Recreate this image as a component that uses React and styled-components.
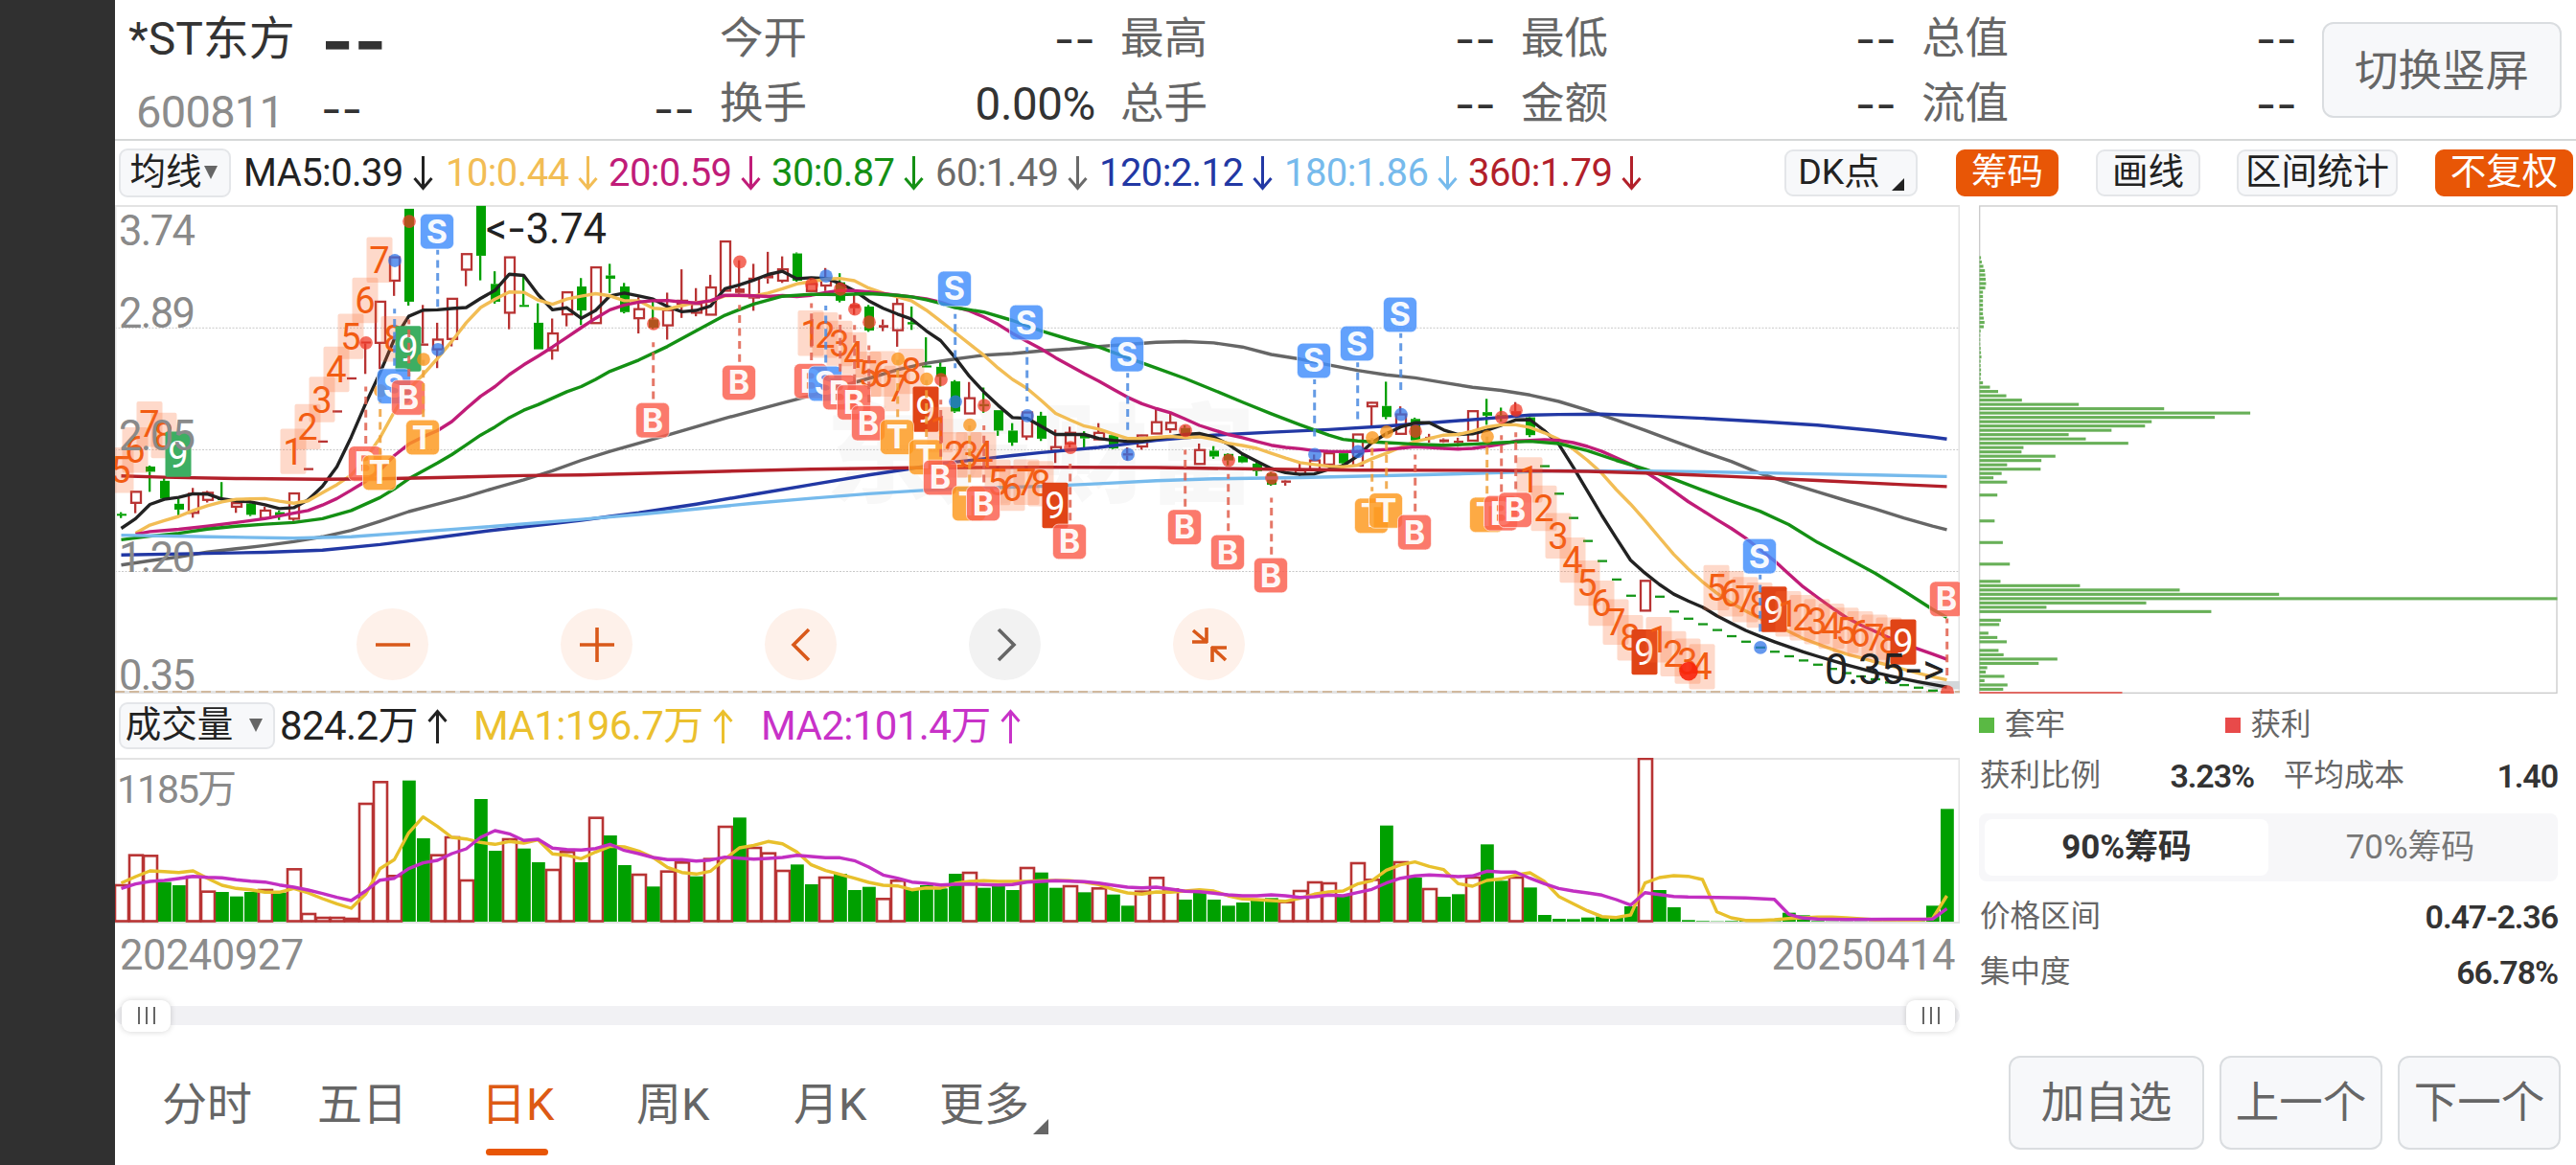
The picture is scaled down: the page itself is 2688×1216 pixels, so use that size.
import React from "react";
import styled, { createGlobalStyle } from "styled-components";

const FONT = 'Roboto, "Noto Sans CJK SC", sans-serif';

const GlobalStyle = createGlobalStyle`
  * { box-sizing: border-box; }
  html, body { margin: 0; padding: 0; background: #fff; }
  body { width: 2688px; height: 1216px; overflow: hidden; font-family: ${FONT}; color: #222; }
  button { font-family: inherit; margin: 0; }
`;

/* ---------- data ---------- */

const STEP = 15;
const FIRST_X = 127;
const xOf = (i) => FIRST_X + STEP * i;
const priceY = (v) => 200 + v / 2.9585;
const volY = (v) => 720 + v / 3;

// index, high, body top, body bottom, low, kind (r hollow, f filled red, g filled green)
const CANDLES = [
  [0, 990, 995, 1000, 1008, "g"], [1, 927, 927, 961, 993, "r"], [2, 846, 849, 865, 927, "g"], [3, 885, 893, 948, 948, "g"],
  [4, 948, 964, 982, 1000, "g"], [5, 915, 933, 992, 1007, "r"], [6, 924, 930, 952, 960, "r"], [7, 897, 947, 951, 951, "g"],
  [8, 955, 962, 973, 992, "r"], [9, 958, 963, 998, 1002, "g"], [10, 973, 985, 1008, 1008, "r"], [11, 985, 990, 1001, 1014, "g"],
  [12, 932, 932, 1010, 1017, "r"], [17, 463, 463, 469, 563, "f"], [18, 340, 340, 467, 548, "r"], [19, 203, 203, 275, 322, "r"],
  [20, 53, 53, 340, 352, "g"], [21, 350, 469, 476, 476, "f"], [22, 405, 457, 487, 545, "r"], [23, 331, 331, 455, 478, "r"],
  [24, 193, 193, 241, 292, "r"], [25, 44, 44, 198, 274, "g"], [26, 246, 285, 340, 346, "g"], [27, 203, 203, 374, 425, "r"],
  [28, 262, 350, 354, 354, "g"], [29, 345, 405, 487, 487, "g"], [30, 392, 438, 490, 519, "r"], [31, 311, 311, 379, 416, "r"],
  [32, 267, 293, 367, 412, "g"], [33, 234, 234, 406, 406, "r"], [34, 223, 259, 269, 313, "g"], [35, 282, 293, 372, 376, "g"],
  [36, 326, 363, 391, 438, "r"], [37, 340, 395, 420, 424, "g"], [38, 312, 366, 413, 457, "r"], [39, 240, 337, 347, 390, "r"],
  [40, 298, 347, 374, 385, "r"], [41, 257, 296, 380, 380, "r"], [42, 154, 154, 306, 306, "r"], [43, 212, 299, 313, 318, "f"],
  [44, 223, 269, 327, 368, "r"], [45, 186, 258, 268, 284, "f"], [46, 200, 240, 275, 282, "r"], [47, 188, 191, 275, 278, "g"],
  [48, 265, 285, 307, 307, "r"], [49, 236, 268, 290, 307, "r"], [50, 252, 280, 337, 342, "g"], [51, 318, 348, 360, 380, "f"],
  [52, 350, 355, 429, 433, "g"], [53, 395, 412, 420, 431, "f"], [54, 325, 347, 428, 479, "r"], [55, 355, 403, 410, 427, "g"],
  [56, 450, 537, 542, 542, "g"], [57, 523, 541, 572, 602, "g"], [58, 582, 586, 679, 683, "g"], [59, 588, 638, 685, 685, "r"],
  [60, 605, 656, 663, 683, "g"], [61, 675, 675, 738, 754, "g"], [62, 715, 738, 775, 785, "g"], [63, 692, 682, 756, 767, "r"],
  [64, 680, 692, 763, 770, "g"], [65, 735, 789, 800, 838, "r"], [66, 726, 745, 778, 790, "r"], [67, 740, 753, 762, 790, "g"],
  [68, 715, 745, 765, 765, "r"], [69, 748, 752, 793, 795, "g"], [70, 790, 808, 815, 830, "f"], [71, 751, 753, 787, 797, "r"],
  [72, 668, 712, 747, 747, "r"], [73, 685, 714, 734, 745, "r"], [74, 722, 730, 747, 755, "g"], [75, 778, 798, 841, 841, "r"],
  [76, 786, 800, 818, 825, "g"], [77, 808, 810, 830, 845, "g"], [78, 812, 817, 836, 838, "g"], [79, 832, 840, 863, 878, "g"],
  [80, 866, 870, 905, 908, "g"], [81, 890, 892, 899, 908, "f"], [82, 840, 861, 872, 887, "r"], [83, 812, 830, 858, 858, "r"],
  [84, 808, 808, 843, 843, "r"], [85, 805, 808, 839, 845, "g"], [86, 750, 750, 846, 846, "r"], [87, 650, 652, 663, 722, "r"],
  [88, 587, 662, 696, 703, "g"], [89, 663, 688, 748, 748, "r"], [90, 698, 702, 768, 772, "g"], [91, 748, 757, 764, 775, "f"],
  [92, 762, 765, 774, 776, "f"], [93, 760, 769, 776, 788, "f"], [94, 678, 678, 769, 769, "r"], [95, 640, 681, 692, 720, "g"],
  [96, 667, 690, 700, 710, "g"], [97, 650, 678, 690, 690, "f"], [98, 693, 697, 752, 758, "g"], [106, 1202, 1202, 1294, 1294, "r"],
];

// one-price limit bars: index, level, kind
const LIMITS = [
  [13, 857, "r"], [14, 772, "r"], [15, 679, "r"], [16, 577, "r"],
  [99, 848, "g"], [100, 933, "g"], [101, 1008, "g"], [102, 1079, "g"], [103, 1141, "g"], [104, 1198, "g"], [105, 1248, "g"],
  [107, 1251, "g"], [108, 1297, "g"], [109, 1319, "g"], [110, 1336, "g"], [111, 1354, "g"], [112, 1373, "g"], [113, 1390, "g"],
  [114, 1408, "g"], [115, 1421, "g"], [116, 1435, "g"], [117, 1448, "g"], [118, 1461, "g"], [119, 1474, "g"], [120, 1487, "g"],
  [121, 1497, "g"], [122, 1506, "g"], [123, 1516, "g"], [124, 1524, "g"], [125, 1532, "g"], [126, 1541, "g"],
];

const run = (start, values) => values.map((v, k) => [start + k, v]);

const MA5 = run(0, [
  1040, 1010, 966, 950, 944, 933, 934, 949, 955, 958, 967, 979, 976, 952, 910, 850, 758, 655, 560, 455, 385, 366, 365, 361, 358,
  330, 305, 255, 259, 318, 365, 359, 391, 367, 322, 313, 322, 332, 355, 371, 367, 353, 300, 288, 273, 256, 246, 269, 266, 268,
  283, 306, 337, 360, 378, 394, 430, 460, 512, 570, 618, 660, 698, 700, 725, 750, 750, 750, 762, 768, 771, 771, 763, 757, 750,
  747, 758, 780, 810, 833, 855, 868, 873, 872, 858, 846, 817, 775, 748, 727, 714, 714, 736, 750, 748, 737, 722, 705, 704, 738,
  780, 850, 925, 1000, 1070, 1138, 1178, 1213, 1243, 1264, 1283, 1310, 1333, 1355, 1373, 1390, 1406, 1421, 1435, 1448, 1461,
  1473, 1485, 1495, 1505, 1514, 1522, 1530,
]);
const MA10 = run(1, [
  1055, 1030, 1016, 1003, 985, 970, 958, 950, 949, 948, 956, 962, 955, 930, 905, 875, 825, 760, 680, 610, 565, 515, 462, 405,
  358, 332, 310, 311, 335, 348, 332, 323, 315, 322, 337, 337, 360, 363, 352, 342, 338, 322, 320, 322, 313, 300, 285, 278, 270,
  268, 275, 298, 313, 325, 338, 366, 400, 435, 470, 505, 545, 580, 607, 645, 685, 705, 724, 733, 748, 762, 762, 759, 756, 760,
  757, 765, 777, 784, 793, 808, 823, 837, 843, 848, 850, 845, 825, 808, 790, 772, 762, 752, 750, 740, 727, 720, 720, 728, 745,
  765, 795, 830, 870, 920, 965, 1015, 1068, 1120, 1165, 1205, 1240, 1270, 1295, 1318, 1338, 1358, 1380, 1397, 1413, 1428, 1440,
  1452, 1463, 1475, 1487, 1498, 1508,
]);
const MA20 = [
  [1, 1058], [2, 1050], [4, 1043], [6, 1033], [8, 1022], [10, 1010],
  ...run(12, [
    993, 985, 968, 948, 922, 895, 860, 815, 780, 757, 738, 710, 670, 632, 602, 565, 535, 508, 480, 450, 420, 391, 365, 350, 341,
    337, 336, 341, 344, 337, 320, 320, 322, 324, 321, 324, 320, 312, 305, 306, 310, 315, 320, 325, 331, 341, 356, 368, 387, 410,
    438, 462, 486, 513, 538, 562, 585, 610, 635, 655, 670, 683, 702, 722, 736, 750, 760, 772, 783, 790, 794, 800, 802, 803, 803,
    799, 796, 792, 788, 790, 793, 795, 793, 787, 780, 770, 768, 766, 768, 775, 787, 802, 822, 842, 865, 893, 925, 957, 985, 1013,
    1040, 1070, 1105, 1140, 1180, 1220, 1253, 1285, 1315, 1338, 1358, 1378, 1396, 1412, 1428, 1444,
  ]),
];
const MA30 = [
  [0, 1075], [2, 1064], [4, 1055], [6, 1042], [8, 1033], [10, 1027], [12, 1022], [14, 1010], [16, 985], [18, 945], [19, 918],
  [20, 887], [21, 862], [22, 838], [23, 812], [24, 782], [25, 752], [26, 727], [27, 698], [28, 675], [29, 658], [30, 638],
  [31, 618], [32, 602], [33, 580], [34, 555], [36, 520], [38, 478], [40, 430], [42, 382], [44, 347], [46, 323], [48, 317],
  [50, 318], [52, 315], [54, 320], [55, 325], [56, 334], [57, 345], [58, 358], [60, 372], [62, 398], [64, 430], [66, 457],
  [68, 480], [70, 513], [72, 545], [74, 577], [76, 613], [78, 650], [80, 686], [82, 720], [84, 752], [85, 765], [86, 770],
  [88, 775], [90, 780], [92, 783], [94, 780], [96, 775], [98, 771], [100, 778], [102, 800], [104, 830], [106, 857], [108, 888],
  [110, 922], [112, 955], [114, 987], [116, 1028], [118, 1083], [120, 1130], [122, 1178], [124, 1233], [126, 1290], [127, 1315],
];
const MA60 = [
  [0, 1153], [2, 1140], [4, 1128], [6, 1113], [8, 1103], [10, 1093], [12, 1081], [14, 1066], [16, 1046], [18, 1018], [20, 988],
  [22, 965], [24, 942], [26, 915], [28, 890], [30, 862], [32, 830], [34, 802], [38, 752], [42, 700], [46, 653], [48, 630],
  [50, 602], [52, 577], [54, 550], [56, 530], [58, 517], [60, 505], [62, 500], [64, 492], [66, 486], [68, 478], [70, 472],
  [72, 465], [74, 463], [76, 467], [78, 480], [80, 503], [82, 517], [84, 535], [86, 552], [88, 566], [90, 575], [92, 590],
  [94, 604], [96, 614], [98, 628], [100, 648], [102, 675], [104, 705], [106, 737], [108, 770], [110, 803], [112, 833],
  [114, 870], [116, 900], [118, 927], [120, 954], [122, 980], [124, 1008], [126, 1033], [127, 1044],
];
const MA120 = [
  [0, 1122], [5, 1118], [10, 1114], [14, 1107], [18, 1090], [22, 1068], [26, 1045], [30, 1025], [32, 1015], [34, 1003],
  [36, 992], [40, 965], [44, 935], [48, 905], [52, 875], [55, 855], [57, 840], [60, 825], [62, 815], [64, 806], [68, 790],
  [72, 768], [76, 752], [80, 743], [84, 735], [88, 724], [92, 711], [96, 697], [98, 690], [100, 688], [103, 687], [106, 692],
  [110, 700], [114, 710], [118, 721], [122, 738], [126, 758], [127, 764],
];
const MA180 = [
  [0, 1061], [6, 1066], [12, 1070], [16, 1066], [20, 1053], [26, 1033], [32, 1012], [36, 997], [40, 980], [44, 962], [48, 947],
  [52, 933], [56, 922], [60, 915], [64, 910], [68, 902], [72, 893], [76, 887], [82, 883], [90, 875], [96, 868], [100, 862],
  [106, 863], [110, 865], [116, 870], [122, 875], [127, 880],
];
const MA360 = [
  [0, 878], [3, 882], [8, 886], [14, 888], [18, 887], [22, 883], [28, 877], [32, 875], [40, 866], [48, 857], [55, 853],
  [64, 851], [72, 852], [80, 857], [86, 860], [96, 861], [102, 864], [106, 869], [112, 880], [118, 892], [124, 905], [127, 911],
];

const AVERAGES = [
  { color: "#666", points: MA60 },
  { color: "#2238a4", points: MA120 },
  { color: "#222", points: MA5 },
  { color: "#f2bd55", points: MA10 },
  { color: "#c01c78", points: MA20 },
  { color: "#149014", points: MA30 },
  { color: "#76baec", points: MA180 },
  { color: "#b2202a", points: MA360 },
];

// index, level of the badge centre, letter, stem start, stem end
const SIGNALS = [
  [17, 840, "B", 602, 785], [18, 868, "T", 640, 820], [19, 601, "S", 362, 545], [20, 636, "B", 395, 580], [21, 759, "T", 520, 700],
  [22, 123, "S", 180, 362], [37, 706, "B", 465, 647], [43, 590, "B", 350, 532], [48, 585, "B", 345, 525], [49, 593, "S", 352, 535],
  [50, 620, "B", 380, 565], [51, 651, "B", 412, 597], [52, 715, "B", 475, 660], [54, 758, "T", 520, 700], [56, 820, "T", 582, 765],
  [57, 883, "B", 643, 827], [58, 300, "S", 378, 545], [59, 963, "T", 722, 905], [60, 963, "B", 722, 905], [63, 404, "S", 480, 648],
  [66, 1081, "B", 840, 1023], [70, 502, "S", 560, 742], [74, 1036, "B", 797, 978], [77, 1114, "B", 872, 1057],
  [80, 1185, "B", 945, 1127], [83, 522, "S", 580, 763], [86, 469, "S", 527, 710], [87, 1001, "T", 760, 925],
  [88, 985, "T", 742, 925], [89, 380, "S", 437, 625], [90, 1052, "B", 812, 993], [95, 998, "T", 757, 940], [96, 993, "B", 752, 935],
  [97, 983, "B", 743, 925], [114, 1126, "S", 1183, 1365], [127, 1258, "B", 1318, 1500],
];

const DOTS = [
  [17, 467, "B"], [18, 615, "T"], [19, 213, "S"], [20, 92, "B"], [21, 518, "T"], [22, 488, "S"], [37, 408, "B"], [43, 217, "B"],
  [48, 287, "B"], [49, 261, "S"], [50, 301, "B"], [51, 363, "B"], [52, 403, "B"], [54, 517, "T"], [56, 579, "T"], [57, 580, "B"],
  [58, 649, "S"], [59, 721, "T"], [60, 660, "B"], [63, 692, "S"], [66, 790, "B"], [70, 812, "S"], [74, 738, "B"], [77, 830, "B"],
  [80, 884, "B"], [83, 812, "S"], [86, 803, "S"], [87, 760, "T"], [88, 742, "T"], [89, 688, "S"], [90, 740, "B"], [95, 757, "T"],
  [96, 697, "B"], [97, 675, "B"], [114, 1408, "S"], [127, 1545, "B"],
];

const SIGNAL_COLORS = {
  S: { badge: "#448ffb", dot: "#2f74e8", stem: "#4a8ae0" },
  B: { badge: "#fa6050", dot: "#f03a28", stem: "#e0604e" },
  T: { badge: "#fd9a20", dot: "#fb9010", stem: "#eea03a" },
};

// index, level of the box centre, digit, box colour for a completed count
const COUNTS = [
  [0, 860, 5], [1, 798, 6], [2, 718, 7], [3, 753, 8], [4, 811, 9, "#3dae62"],
  [12, 802, 1], [13, 726, 2], [14, 642, 3], [15, 549, 4], [16, 447, 5], [17, 336, 6], [18, 211, 7], [19, 455, 8], [20, 485, 9, "#3dae62"],
  [48, 437, 1], [49, 443, 2], [50, 469, 3], [51, 504, 4], [52, 564, 5], [53, 563, 6], [54, 608, 7], [55, 555, 8], [56, 672, 9, "#e04416"],
  [57, 735, 1], [58, 813, 2], [59, 813, 3], [60, 813, 4], [61, 898, 5], [62, 916, 6], [63, 897, 7], [64, 902, 8], [65, 969, 9, "#e04416"],
  [98, 890, 1], [99, 978, 2], [100, 1063, 3], [101, 1138, 4], [102, 1209, 5], [103, 1271, 6], [104, 1329, 7], [105, 1378, 8],
  [106, 1422, 9, "#e04416"], [107, 1384, 1], [108, 1427, 2], [109, 1450, 3], [110, 1467, 4],
  [111, 1223, 5], [112, 1242, 6], [113, 1260, 7], [114, 1277, 8], [115, 1290, 9, "#e04416"],
  [116, 1304, 1], [117, 1316, 2], [118, 1328, 3], [119, 1342, 4], [120, 1355, 5], [121, 1366, 6], [122, 1376, 7], [123, 1385, 8],
  [124, 1391, 9, "#e04416"],
];

const VOLUMES = (
  "r612 r518 r520 g602 g612 r585 r632 g633 g647 g633 r627 g635 r562 r702 r714 r714 r717 r357 r289 r583 g284 g465 r518 r462 r597 " +
  "g342 g504 r468 g497 g540 r564 r508 g540 r401 g456 g549 r579 g616 r569 r541 g584 r530 r429 g400 r495 r512 r567 g547 g609 r588 " +
  "g576 g627 g617 r655 r598 g625 g612 g622 g576 r573 g620 g615 g627 r558 g572 g620 r615 g634 r622 g641 g676 r632 r589 r625 g657 " +
  "g630 g657 g676 g666 g660 g652 r665 r630 r603 r606 g645 r543 r595 g425 r540 g588 r624 g648 g640 r588 g484 g598 r588 g619 g705 " +
  "g717 g718 g713 g710 g712 g678 r216 g627 g681 g721 g724 g725 g724 g722 g725 g724 g698 g706 g724 g725 g725 g725 g725 g725 g725 " +
  "g724 g676 g373"
).split(" ").map((s) => [s[0], Number(s.slice(1))]);

const VOL_MA1 = [
  ...run(0, [
    605, 585, 567, 569, 572, 567, 590, 612, 622, 626, 634, 634, 622, 636, 654, 670, 684, 640, 560, 532, 448, 398, 428, 462, 467,
    478, 484, 475, 480, 470, 514, 518, 529, 508, 490, 492, 505, 525, 556, 572, 577, 568, 530, 495, 487, 475, 482, 508, 548, 566,
    578, 590, 603, 612, 614, 626, 620, 621, 606, 600, 598, 600, 600, 600, 598, 597, 598, 602, 610, 625, 636, 640, 633, 634, 630,
    626, 630, 645, 655, 657, 660, 662, 653, 640, 633, 630, 608, 598, 565, 548, 539, 553, 563, 607, 615, 597, 592, 580, 573, 600,
    647, 670, 692, 710, 713, 705, 605, 588, 582, 584, 594, 695, 714, 722, 722, 720, 716, 714, 712, 712, 714,
  ]),
  [122, 720], [125, 721], [126, 717], [127, 645],
];
const VOL_MA2 = [
  ...run(0, [
    622, 608, 600, 597, 591, 584, 587, 589, 595, 599, 602, 611, 618, 627, 638, 650, 660, 630, 596, 590, 560, 542, 534, 513, 498,
    462, 441, 451, 472, 468, 496, 500, 502, 497, 484, 503, 513, 525, 532, 532, 536, 533, 524, 527, 530, 528, 525, 518, 522, 526,
    526, 535, 555, 580, 590, 602, 606, 611, 609, 608, 610, 611, 610, 602, 600, 598, 599, 601, 605, 612, 618, 620, 618, 624, 631,
    632, 637, 642, 645, 645, 642, 645, 650, 648, 643, 645, 635, 625, 605, 590, 583, 580, 582, 585, 583, 568, 571, 571, 590, 607,
    622, 630, 636, 643, 657, 674, 635, 641, 647, 649,
  ]),
  [111, 650], [113, 652], [115, 656], [116, 703], [117, 715], [118, 718], [120, 719], [126, 718], [127, 685],
];

// holdings per price level: slot from the top, share of the widest bar (1483)
const CHIPS = [
  ...run(0, [
    4, 6, 10, 14, 15, 16, 17, 15, 9, 9, 9, 9, 9, 9, 11, 13, 11, 3, 2, 2, 2, 3, 4, 5, 3, 3, 4, 4, 3, 9, 27, 48, 69, 109, 255, 474,
    695, 604, 442, 425, 339, 229, 273, 382, 113, 108, 195, 159, 71, 157, 57, 36, 71,
  ]),
  [55, 46], [61, 39], [66, 60], [71, 78],
  ...run(75, [54, 258, 514, 769, 1483, 428, 172, 595]),
  [84, 55], [85, 51], [87, 23], [88, 46], [89, 70],
  ...run(91, [49, 62, 200, 152, 20, 16, 64, 13, 72, 61]),
];

const LEGEND = [
  { text: "MA5:0.39", color: "#222", width: 211 },
  { text: "10:0.44", color: "#f2bd55", width: 170 },
  { text: "20:0.59", color: "#c01c78", width: 170 },
  { text: "30:0.87", color: "#149014", width: 171 },
  { text: "60:1.49", color: "#6a6a6a", width: 171 },
  { text: "120:2.12", color: "#2238a4", width: 193 },
  { text: "180:1.86", color: "#76baec", width: 192 },
  { text: "360:1.79", color: "#b2202a", width: 190 },
];

const VOL_LEGEND = [
  { text: "824.2万", color: "#222", width: 202 },
  { text: "MA1:196.7万", color: "#ebc02e", width: 300 },
  { text: "MA2:101.4万", color: "#c832c8", width: 300 },
];

const STATS = [
  [["今开", "--"], ["换手", "0.00%"]],
  [["最高", "--"], ["总手", "--"]],
  [["最低", "--"], ["金额", "--"]],
  [["总值", "--"], ["流值", "--"]],
];

const TABS = [
  ["分时", 162], ["五日", 171], ["日K", 162], ["周K", 164], ["月K", 152], ["更多", 120],
];

/* ---------- styled parts ---------- */

const Screen = styled.div`
  display: flex;
  width: 2688px;
  height: 1216px;
  background: #fff;
`;
const Edge = styled.div`
  flex: none;
  width: 120px;
  background: #303030;
`;
const Main = styled.main`
  flex: 1;
  display: flex;
  flex-direction: column;
  min-width: 0;
`;
const Header = styled.header`
  display: flex;
  height: 147px;
  padding: 7px 15px 0 14px;
  border-bottom: 2px solid #d6d8d8;
`;
const Column = styled.div`
  flex: none;
  width: ${(p) => p.$width}px;
  margin-right: ${(p) => p.$gap || 0}px;
`;
const Line = styled.div`
  display: flex;
  justify-content: space-between;
  align-items: center;
  height: 68px;
  padding-top: ${(p) => p.$drop || 0}px;
  padding-left: ${(p) => p.$indent || 0}px;
  line-height: 68px;
  white-space: nowrap;
`;
const StockName = styled.span`
  font-size: 48px;
  color: #333;
`;
const StockCode = styled.span`
  font-size: 47px;
  letter-spacing: -0.7px;
  color: #8c8c8c;
`;
const Label = styled.span`
  font-size: 45.5px;
  color: #666;
`;
const Value = styled.span`
  font-size: 47.5px;
  letter-spacing: -0.4px;
  color: #333;
`;
const Blank = styled.span`
  font-family: Inter, sans-serif;
  font-size: ${(p) => (p.$big ? 73 : 47)}px;
  font-weight: ${(p) => (p.$big ? 700 : 400)};
  color: #333;
`;
const PlainButton = styled.button`
  flex: none;
  width: ${(p) => p.$width}px;
  height: ${(p) => p.$height}px;
  padding: ${(p) => p.$drop || 0}px 0 0;
  border: 2px solid #dadde0;
  border-radius: 12px;
  background: #f7f8fa;
  color: #666;
  font-size: 45.5px;
  line-height: 1;
  white-space: nowrap;
`;
const HeaderButton = styled(PlainButton)`
  margin: 16px 0 0 auto;
  padding-top: 3px;
`;
const Toolbar = styled.div`
  display: flex;
  align-items: center;
  height: 67px;
  padding: 0 3px 0 4px;
`;
const Chip = styled.button`
  flex: none;
  display: flex;
  align-items: center;
  justify-content: center;
  gap: ${(p) => p.$gap || 0}px;
  width: ${(p) => p.$width}px;
  height: ${(p) => p.$height || 49}px;
  margin-right: ${(p) => p.$after || 0}px;
  padding: 0 ${(p) => p.$shift || 0}px 2px 0;
  border: 2px solid ${(p) => (p.$active ? "#e85606" : "#e4e6e9")};
  border-radius: 9px;
  background: ${(p) => (p.$active ? "#e85606" : "#f7f8fa")};
  color: ${(p) => (p.$active ? "#fff" : "#222")};
  font-size: 37.5px;
  line-height: 1;
  white-space: nowrap;
`;
const Legend = styled.div`
  display: flex;
  flex: 1;
  padding-left: ${(p) => p.$indent}px;
`;
const LegendItem = styled.div`
  flex: none;
  display: flex;
  align-items: center;
  gap: 10px;
  width: ${(p) => p.$width}px;
  color: ${(p) => p.$color};
  font-size: ${(p) => p.$size}px;
  letter-spacing: -0.6px;
  line-height: 1;
  white-space: nowrap;
`;
const Body = styled.div`
  display: flex;
  gap: 20px;
  height: 870px;
`;
const Charts = styled.section`
  flex: none;
  display: flex;
  flex-direction: column;
  width: 1925px;
`;
const PriceArea = styled.div`
  position: relative;
  height: 510px;
`;
const Drawing = styled.svg`
  display: block;
`;
const Controls = styled.div`
  position: absolute;
  left: 252px;
  bottom: 14px;
  display: flex;
  gap: 138px;
`;
const RoundButton = styled.button`
  display: flex;
  align-items: center;
  justify-content: center;
  width: 75px;
  height: 75px;
  padding: 0;
  border: 0;
  border-radius: 50%;
  background: ${(p) => (p.$muted ? "#f2f2f2" : "#fef1ea")};
  color: ${(p) => (p.$muted ? "#666" : "#d9591a")};
`;
const Dates = styled.div`
  display: flex;
  justify-content: space-between;
  padding: 9px 5px 0 5px;
  color: #8c8c8c;
  font-size: 43.5px;
  letter-spacing: -0.5px;
  line-height: 50px;
`;
const Track = styled.div`
  display: flex;
  align-items: center;
  justify-content: space-between;
  height: 20px;
  margin-top: 27px;
  padding: 0 5px 0 7px;
  border-radius: 10px;
  background: #f1f1f4;
`;
const Thumb = styled.div`
  display: flex;
  align-items: center;
  justify-content: center;
  gap: 6px;
  width: 51px;
  height: 33px;
  border-radius: 9px;
  background: #fff;
  box-shadow: 0 0 6px rgba(0, 0, 0, 0.18);
`;
const Grip = styled.i`
  width: 2px;
  height: 18px;
  background: #666;
`;
const Panel = styled.aside`
  width: 604px;
  color: #666;
  font-size: 31.5px;
`;
const Keys = styled.div`
  display: flex;
  align-items: center;
  height: 66px;
`;
const Key = styled.div`
  display: flex;
  align-items: center;
  gap: 11px;
  width: 256.5px;
  line-height: 1;
`;
const Swatch = styled.i`
  width: 16px;
  height: 16px;
  background: ${(p) => p.$color};
`;
const Pairs = styled.div`
  display: flex;
  align-items: center;
  gap: 31px;
  height: ${(p) => p.$height}px;
  padding-left: 1px;
`;
const Pair = styled.div`
  display: flex;
  flex: ${(p) => (p.$width ? "none" : 1)};
  width: ${(p) => (p.$width ? p.$width + "px" : "auto")};
  align-items: center;
  justify-content: space-between;
  line-height: 1;
`;
const Strong = styled.b`
  color: #333;
  font-size: 34px;
  font-weight: 600;
  letter-spacing: -1.1px;
`;
const Segments = styled.div`
  display: flex;
  height: 71px;
  margin: 20px 0 8px;
  padding: 6px;
  border-radius: 8px;
  background: #f7f7f9;
`;
const Segment = styled.button`
  flex: 1;
  padding: 0;
  border: 0;
  border-radius: 8px;
  background: ${(p) => (p.$active ? "#fff" : "transparent")};
  color: ${(p) => (p.$active ? "#333" : "#777")};
  font-size: 35px;
  font-weight: ${(p) => (p.$active ? 700 : 400)};
  letter-spacing: -0.1px;
  line-height: 1;
`;
const Footer = styled.footer`
  display: flex;
  justify-content: space-between;
  padding: 18px 16px 0 49px;
`;
const Tabs = styled.nav`
  display: flex;
`;
const Tab = styled.div`
  display: flex;
  flex-direction: column;
  width: ${(p) => p.$width}px;
  color: ${(p) => (p.$active ? "#dd5a14" : "#666")};
  font-size: 47px;
  line-height: 97px;
  white-space: nowrap;

  &::after {
    content: "";
    width: 65px;
    height: 7px;
    margin: -2px 0 0 5px;
    border-radius: 4px;
    background: ${(p) => (p.$active ? "#e85606" : "transparent")};
  }
`;
const TabText = styled.div`
  display: flex;
  align-items: flex-end;
  gap: 4px;
  height: 99px;
`;
const Corner = styled.i`
  width: 0;
  height: 0;
  margin-bottom: ${(p) => p.$lift}px;
  border-left: ${(p) => p.$size}px solid transparent;
  border-bottom: ${(p) => p.$size}px solid ${(p) => p.$color};
`;
const Caret = styled.i`
  width: 0;
  height: 0;
  border-left: 7.5px solid transparent;
  border-right: 7.5px solid transparent;
  border-top: 14px solid #666;
`;
const Actions = styled.div`
  display: flex;
  gap: 16px;
`;

/* ---------- drawings ---------- */

const Arrow = ({ up }) => (
  <svg width="21" height="36" viewBox="0 0 21 36" fill="none" stroke="currentColor" strokeWidth="3">
    <path d={up ? "M10.5 36V2M1.5 13L10.5 2.5L19.5 13" : "M10.5 0V33M1.5 23L10.5 33.5L19.5 23"} />
  </svg>
);

const Trend = ({ points, color, y, width = 3.4 }) => (
  <polyline
    points={points.map(([i, v]) => `${xOf(i) - 0.5},${y(v).toFixed(1)}`).join(" ")}
    fill="none"
    stroke={color}
    strokeWidth={width}
    strokeLinejoin="round"
  />
);

const RED = "#b83434";
const GREEN = "#00a000";

const Candle = ({ data: [i, high, top, bottom, low, kind] }) => {
  const x = xOf(i);
  const color = kind === "g" ? GREEN : RED;
  const t = priceY(top);
  const b = priceY(bottom);
  const hollow = kind === "r";
  return (
    <g>
      {high < top && <rect x={x - 2} y={priceY(high)} width="2.3" height={t - priceY(high)} fill={color} />}
      {low > bottom && <rect x={x - 2} y={b} width="2.3" height={priceY(low) - b} fill={color} />}
      {hollow ? (
        <rect x={x - 5} y={t} width="10" height={Math.max(2, b - t)} fill="none" stroke={color} strokeWidth="2.3" />
      ) : (
        <rect x={x - 5} y={t} width="10" height={Math.max(2, b - t)} fill={color} />
      )}
    </g>
  );
};

const Count = ({ data: [i, level, digit, full] }) => {
  const x = xOf(i) - 1;
  const y = priceY(level);
  return (
    <g>
      <rect x={x - 13.5} y={y - 23.7} width="27" height="47.4" rx="2" fill={full || "#fa6e32"} fillOpacity={full ? 1 : 0.26} />
      <text x={x} y={y + 13.5} textAnchor="middle" fontSize="38" fill={full ? "#fff" : "#f25c12"}>{digit}</text>
    </g>
  );
};

const Signal = ({ data: [i, level, letter, from, to] }) => {
  const x = xOf(i) - 1;
  const y = priceY(level);
  const c = SIGNAL_COLORS[letter];
  return (
    <g>
      <line x1={x + 0.7} x2={x + 0.7} y1={priceY(from)} y2={priceY(to)} stroke={c.stem} strokeWidth="3" strokeOpacity="0.85" strokeDasharray="8 5.6" strokeDashoffset="3" />
      <rect x={x - 17.5} y={y - 18.3} width="35" height="36.6" rx="6" fill={c.badge} fillOpacity="0.84" stroke="#fff" strokeOpacity="0.6" strokeWidth="1" />
      <text x={x} y={y + 12} textAnchor="middle" fontSize="34" fontWeight="700" fill="#fff" fillOpacity="0.95" fontFamily="Inter, sans-serif">{letter}</text>
    </g>
  );
};

const AxisText = ({ x = 124, y, width = 80, color = "#8a8a8a", children }) => (
  <text x={x} y={y} fontSize="43.5" fill={color} textLength={width}>{children}</text>
);

const PriceChart = () => (
  <Drawing width="1925" height="510" viewBox="120 214 1925 510" fontFamily={FONT}>
    <text x="862" y="516" fontSize="112" fontWeight="900" fill="#f8f8f8" textLength="448" fontFamily="'Noto Sans CJK SC'">东方财富</text>
    {[421, 797, 1173].map((v) => (
      <line key={v} x1="120" x2="2045" y1={priceY(v)} y2={priceY(v)} stroke="#c8c8c8" strokeWidth="1" strokeDasharray="2 1.5" />
    ))}
    <path d="M120.5 722.5V215H2044.5V722.5" fill="none" stroke="#e3e3e3" strokeWidth="2" />
    <line x1="120" x2="2045" y1="722.4" y2="722.4" stroke="#e3e3e3" strokeWidth="3" />
    <line x1="120" x2="2045" y1="722" y2="722" stroke="#c0905c" strokeWidth="1.2" strokeDasharray="10 5" />
    <path d="M1990 711H2045V719.5H2020Z" fill="#d3d7da" />
    {CANDLES.map((c) => <Candle key={c[0]} data={c} />)}
    {LIMITS.map(([i, v, kind]) => (
      <rect key={i} x={xOf(i) - 5} y={priceY(v) - 1.2} width="10" height="2.3" fill={kind === "g" ? "#16961a" : RED} />
    ))}
    {AVERAGES.map((a) => <Trend key={a.color} points={a.points} color={a.color} y={priceY} />)}
    {COUNTS.map((c) => <Count key={c[0]} data={c} />)}
    {DOTS.map(([i, v, letter]) => (
      <circle key={i} cx={xOf(i)} cy={priceY(v)} r="6.9" fill={SIGNAL_COLORS[letter].dot} fillOpacity="0.74" />
    ))}
    <circle cx={xOf(109)} cy={priceY(1481)} r="9.8" fill="#f8240c" fillOpacity="0.9" />
    {SIGNALS.map((s) => <Signal key={s[0]} data={s} />)}
    <AxisText y="256">3.74</AxisText>
    <AxisText y="341.5">2.89</AxisText>
    <AxisText y="469.6">2.05</AxisText>
    <AxisText y="596.7">1.20</AxisText>
    <AxisText y="719.5">0.35</AxisText>
    <AxisText x={507} y={253.5} width={126} color="#222">&lt;<tspan fontFamily="Inter, sans-serif">-</tspan>3.74</AxisText>
    <AxisText x={1904} y={713.8} width={125} color="#222">0.35<tspan fontFamily="Inter, sans-serif">-</tspan>&gt;</AxisText>
  </Drawing>
);

const VolumeChart = () => (
  <Drawing width="1925" height="173" viewBox="120 791 1925 173" fontFamily={FONT}>
    <path d="M120.5 963V792H2044.5V963Z" fill="none" stroke="#e3e3e3" strokeWidth="2" />
    {VOLUMES.map(([kind, v], i) => {
      const x = xOf(i);
      const y = volY(v);
      return kind === "g" ? (
        <rect key={i} x={x - 7} y={y} width="13.8" height={962 - y} fill={GREEN} />
      ) : (
        <rect key={i} x={x - 7} y={y} width="14" height={Math.max(1, 961.5 - y)} fill="#fff" stroke={RED} strokeWidth="2.6" />
      );
    })}
    <Trend points={VOL_MA1} color="#e8c02c" y={volY} />
    <Trend points={VOL_MA2} color="#c22fc2" y={volY} />
    <text x="122" y="838" fontSize="41" fill="#8a8a8a" textLength="125">1185万</text>
  </Drawing>
);

const ChipChart = () => (
  <Drawing width="604" height="510" viewBox="2065 214 604 510">
    <rect x="2065.7" y="215" width="602.3" height="508.3" fill="none" stroke="#c9c9c9" strokeWidth="1.3" />
    {CHIPS.map(([k, v]) => (
      <rect key={k} x="2065.5" y={267.4 + 4.505 * k} width={(v / 1483) * 603} height="3.1" fill="#68b058" />
    ))}
    <rect x="2065.5" y="722" width="149" height="2" fill="#e06a64" />
  </Drawing>
);

const Glyph = ({ d }) => (
  <svg width="40" height="40" viewBox="0 0 40 40" fill="none" stroke="currentColor" strokeWidth="3.6">
    <path d={d} />
  </svg>
);

const CONTROL_ICONS = [
  "M2 20H38",
  "M2 20H38M20 2V38",
  "M28 4L12 20L28 36",
  "M13 4L29 20L13 36",
  "M3 5L17 17M2 17H18M17 2V18M23 38V22M22 23H38M23 23L37 36",
];

const StatValue = ({ children }) => (children === "--" ? <Blank>--</Blank> : <Value>{children}</Value>);

/* ---------- page ---------- */

export default function App() {
  return (
    <Screen>
      <GlobalStyle />
      <Edge />
      <Main>
        <Header>
          <Column $width={201}>
            <Line><StockName>*ST东方</StockName></Line>
            <Line $drop={16} $indent={8}><StockCode>600811</StockCode></Line>
          </Column>
          <Column $width={390} $gap={26}>
            <Line $drop={4}><Blank $big>--</Blank></Line>
            <Line $drop={10}><Blank>--</Blank><Blank>--</Blank></Line>
          </Column>
          {STATS.map((rows, i) => (
            <Column key={i} $width={392} $gap={26}>
              {rows.map(([label, value]) => (
                <Line key={label}><Label>{label}</Label><StatValue>{value}</StatValue></Line>
              ))}
            </Column>
          ))}
          <HeaderButton $width={250} $height={100}>切换竖屏</HeaderButton>
        </Header>
        <Toolbar>
          <Chip $width={117} $height={51} $gap={2} $shift={3}>均线<Caret /></Chip>
          <Legend $indent={13}>
            {LEGEND.map((l) => (
              <LegendItem key={l.text} $width={l.width} $color={l.color} $size={40}>{l.text}<Arrow /></LegendItem>
            ))}
          </Legend>
          <Chip $width={139} $gap={12} $after={40}>DK点<Corner $size={13} $lift={-26} $color="#222" /></Chip>
          <Chip $width={107} $after={39} $active>筹码</Chip>
          <Chip $width={109} $after={38}>画线</Chip>
          <Chip $width={168} $after={39}>区间统计</Chip>
          <Chip $width={144} $active>不复权</Chip>
        </Toolbar>
        <Body>
          <Charts>
            <PriceArea>
              <PriceChart />
              <Controls>
                {CONTROL_ICONS.map((d, i) => (
                  <RoundButton key={i} $muted={i === 3}><Glyph d={d} /></RoundButton>
                ))}
              </Controls>
            </PriceArea>
            <Toolbar>
              <Chip $width={163} $gap={17} $shift={6}>成交量<Caret /></Chip>
              <Legend $indent={5}>
                {VOL_LEGEND.map((l) => (
                  <LegendItem key={l.text} $width={l.width} $color={l.color} $size={42}>{l.text}<Arrow up /></LegendItem>
                ))}
              </Legend>
            </Toolbar>
            <VolumeChart />
            <Dates><span>20240927</span><span>20250414</span></Dates>
            <Track>
              <Thumb><Grip /><Grip /><Grip /></Thumb>
              <Thumb><Grip /><Grip /><Grip /></Thumb>
            </Track>
          </Charts>
          <Panel>
            <ChipChart />
            <Keys>
              <Key><Swatch $color="#5ab944" />套牢</Key>
              <Key><Swatch $color="#e84a4a" />获利</Key>
            </Keys>
            <Pairs $height={39}>
              <Pair $width={286}>获利比例<Strong>3.23%</Strong></Pair>
              <Pair>平均成本<Strong>1.40</Strong></Pair>
            </Pairs>
            <Segments>
              <Segment $active>90%筹码</Segment>
              <Segment>70%筹码</Segment>
            </Segments>
            <Pairs $height={58}><Pair>价格区间<Strong>0.47-2.36</Strong></Pair></Pairs>
            <Pairs $height={58}><Pair>集中度<Strong>66.78%</Strong></Pair></Pairs>
          </Panel>
        </Body>
        <Footer>
          <Tabs>
            {TABS.map(([name, width]) => (
              <Tab key={name} $width={width} $active={name === "日K"}>
                <TabText>{name}{name === "更多" && <Corner $size={16} $lift={17} $color="#666" />}</TabText>
              </Tab>
            ))}
          </Tabs>
          <Actions>
            <PlainButton $width={204} $height={98} $drop={2}>加自选</PlainButton>
            <PlainButton $width={170} $height={98} $drop={2}>上一个</PlainButton>
            <PlainButton $width={170} $height={98} $drop={2}>下一个</PlainButton>
          </Actions>
        </Footer>
      </Main>
    </Screen>
  );
}
